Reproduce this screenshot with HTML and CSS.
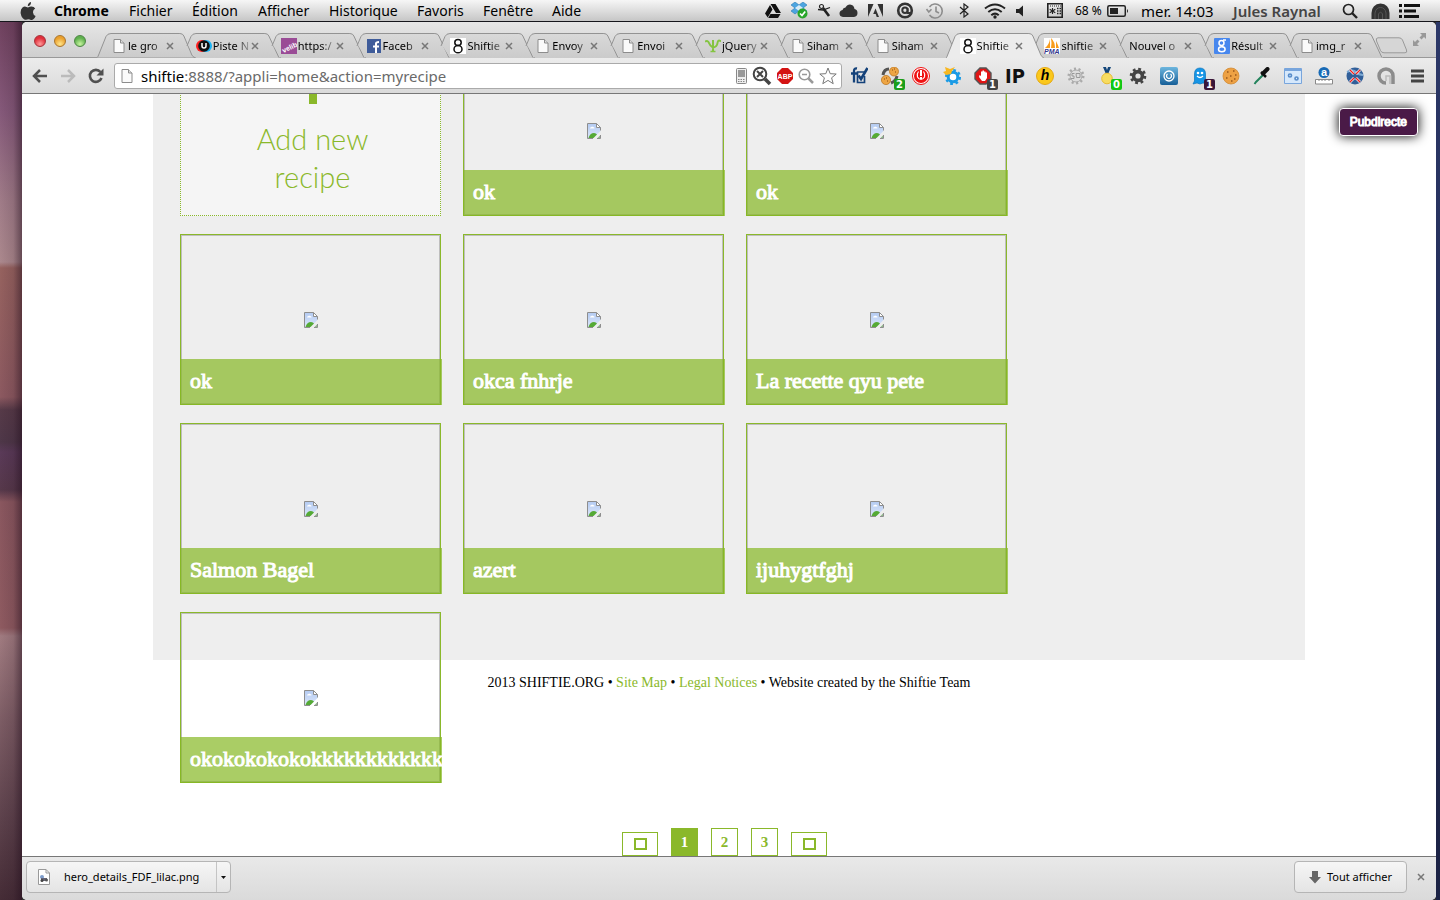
FILE: index.html
```html
<!DOCTYPE html>
<html lang="fr">
<head>
<meta charset="utf-8">
<title>Shiftie</title>
<link rel="stylesheet" href="styles.css">
</head>
<body>
<svg class="defs" aria-hidden="true">
  <defs>
    <linearGradient id="tabfill" x1="0" y1="0" x2="0" y2="1"><stop offset="0" stop-color="#d9d9d9"/><stop offset="1" stop-color="#cbcbcb"/></linearGradient>
    <linearGradient id="sky" x1="0" y1="0" x2="0" y2="1"><stop offset="0" stop-color="#b4cbf2"/><stop offset="1" stop-color="#dbe6fa"/></linearGradient>
    <linearGradient id="blue" x1="0" y1="0" x2="0" y2="1"><stop offset="0" stop-color="#6db6de"/><stop offset="1" stop-color="#175f98"/></linearGradient>
    <symbol id="tab-back" viewBox="0 0 99 25" preserveAspectRatio="none"><path d="M14 25 6 12 10 3Q11 .5 14 .5H83Q86 .5 87 3L98 25Z" fill="url(#tabfill)"/><path d="M5 13 9 3.500Q10.500 .5 14 .5H83Q86 .5 87 3L97 24.500" fill="none" stroke="#939393"/></symbol>
    <symbol id="tab-full" viewBox="0 0 99 25" preserveAspectRatio="none"><path d="M0 24.500Q1 24 2 21L9 3.500Q10.500 .5 14 .5H83Q86 .5 87 3L95 22Q96 24 98 24.500" fill="url(#tabfill)" stroke="#939393"/></symbol>
    <symbol id="tab-front" viewBox="0 0 99 25" preserveAspectRatio="none"><path d="M0 25Q1 24 2 21L9 3.500Q10.500 .5 14 .5H83Q86 .5 87 3L95 22Q96 24 98 25" fill="#ececec" stroke="#939393"/></symbol>
    <symbol id="doc" viewBox="0 0 16 16"><path d="M3 1.500H9.500L13 5V14.500H3Z" fill="#fafafa" stroke="#8c8c8c"/><path d="M9.500 1.500V5H13" fill="#ddd" stroke="#8c8c8c"/></symbol>
    <symbol id="eight" viewBox="0 0 16 16"><path d="M0 0H16V16H0Z" fill="#fff"/><ellipse cx="8" cy="4.500" rx="3.200" ry="3" fill="none" stroke="#111" stroke-width="1.500"/><ellipse cx="8" cy="11.200" rx="4" ry="3.600" fill="none" stroke="#111" stroke-width="1.500"/></symbol>
    <symbol id="cross" viewBox="0 0 8 8"><path d="M1 1 7 7M7 1 1 7" stroke="#777" stroke-width="1.500"/></symbol>
    <symbol id="broken" viewBox="0 0 14 16"><path d="M.5 .5H9.500L13.500 4.500V8L6 15.500H.5Z" fill="url(#sky)"/><path d="M3 5.500Q3 4 4.500 4 5 3 6 4 8 4 7.500 5.500Z" fill="#fff"/><path d="M1.500 15Q3 10 7 10 9 10 10 11.500L6.500 15Z" fill="#55aa35"/><path d="M10.500 15 13 12.500V15Z" fill="#8fb98a"/><path d="M9.500 .5V4.500H13.500Z" fill="#fff"/><path d="M6 15.500H.5V.5H9.500L13.500 4.500V7.500M9.500 .5V4.500H13.500M10 15.500H13.500V12" fill="none" stroke="#8e8e8e"/></symbol>
  </defs>
</svg>

<header class="menubar">
  <nav class="menus" aria-label="Menus">
    <button aria-label="Pomme"><svg width="16" height="18" viewBox="0 0 16 18"><path d="M11 0Q11.300 3.500 7.800 4.300 7.600 1 11 0ZM8 5.500Q9.500 4.500 11.500 4.500 14 4.600 15.200 6.500 12.800 8 13 10.500 13.200 13 15.600 14 14 17.800 12 17.900 10.800 17.900 9.800 17.400 8.500 16.900 7 17.400 5.500 18.100 4.400 17.600 1.500 16 .7 11.500 .2 7.500 2.500 5.500 4.500 4 6.500 5Z" fill="#333"/></svg></button>
    <button class="app">Chrome</button><button>Fichier</button><button>Édition</button><button>Afficher</button><button>Historique</button><button>Favoris</button><button>Fenêtre</button><button>Aide</button>
  </nav>
  <div class="status">
    <svg width="16" height="14" viewBox="0 0 16 14"><path d="M5.500 0H10.500L16 9H11ZM5 1 7.500 5.500 2.700 13.500 0 9.500ZM5.500 10H15.500L13 14H3.200Z" fill="#111"/></svg>
    <svg width="18" height="17" viewBox="0 0 18 17"><path d="M5 0 9 3 13 0 17 3 13 6 17 9 13 12 9 9 5 12 1 9 5 6 1 3Z" fill="#4da5e0" stroke="#2b79b5" stroke-width=".6"/><path d="M9 3 13 6 9 9 5 6Z" fill="#d9ecf8"/><circle cx="12.500" cy="11.500" r="5" fill="#28a62a"/><path d="M10 11.500 12 13.500 15.200 9.500" fill="none" stroke="#fff" stroke-width="1.700"/></svg>
    <svg width="15" height="15" viewBox="0 0 15 15"><circle cx="4.500" cy="3.500" r="2" fill="none" stroke="#222" stroke-width="1.200"/><path d="M1 6.500 6 7 13 4.500" fill="none" stroke="#222" stroke-width="1.300"/><path d="M6 5 12 13" stroke="#222" stroke-width="2.600"/></svg>
    <svg width="19" height="13" viewBox="0 0 19 13"><path d="M4 13Q.5 12.500 .5 9.500 .5 6.500 3.500 6 4 3.500 6.500 3.500 8 .5 11 .5 15 .8 15.500 5 18.500 5.500 18.500 9 18.500 12.500 15 13Z" fill="#333"/></svg>
    <svg width="15" height="13" viewBox="0 0 15 13"><path d="M0 0H5.500L0 13ZM9.500 0H15V13ZM7.500 4.500 11 13H8.700L7.700 10H5.200Z" fill="#333"/></svg>
    <svg width="18" height="17" viewBox="0 0 18 17"><circle cx="9" cy="8.500" r="6.800" fill="none" stroke="#333" stroke-width="2.600"/><circle cx="9" cy="8.200" r="2.700" fill="none" stroke="#333" stroke-width="2"/><path d="M11.500 6V11H15" fill="none" stroke="#333" stroke-width="1.800"/></svg>
    <svg width="18" height="16" viewBox="0 0 18 16"><path d="M3.500 4A7 7 0 1 1 3.500 12M.5 6 2.800 9 5.500 6.300M10 3.500V8.500L13 10" fill="none" stroke="#8d8d8d" stroke-width="1.600"/></svg>
    <svg width="10" height="15" viewBox="0 0 10 15"><path d="M1 4 9 11 5 14V1L9 4 1 11" fill="none" stroke="#222" stroke-width="1.200"/></svg>
    <svg width="22" height="16" viewBox="0 0 22 16"><path d="M1 5.500Q11-2.500 21 5.500M4.300 9Q11 3.500 17.700 9M7.300 12.300Q11 9 14.700 12.300" fill="none" stroke="#222" stroke-width="2"/><circle cx="11" cy="14" r="1.700" fill="#222"/></svg>
    <svg width="10" height="12" viewBox="0 0 10 12"><path d="M1 4H4L8 .5V11.500L4 8H1Z" fill="#222"/></svg>
    <svg width="16" height="15" viewBox="0 0 16 15"><path d="M.8 .8H15.200V14.200H.8Z" fill="none" stroke="#222" stroke-width="1.600"/><path d="M3 3H14" stroke="#222" stroke-dasharray="1 1"/><path d="M5.500 5V11M2.700 6.300 8.300 9.700M8.300 6.300 2.700 9.700" stroke="#222" stroke-width="1.100"/><path d="M10 5.500H14M10 8H14M10 10.500H14" stroke="#222" stroke-width="1.500" stroke-dasharray="1.500 1"/></svg>
    <span class="percent">68 %</span>
    <svg width="22" height="12" viewBox="0 0 22 12"><rect x=".8" y=".8" width="17.500" height="10.400" rx="1.500" fill="none" stroke="#222" stroke-width="1.500"/><path d="M3 3H11V9H3Z" fill="#222"/><path d="M20 4Q22 6 20 8Z" fill="#222"/></svg>
    <span class="clock">mer. 14:03</span>
    <span class="user">Jules Raynal</span>
    <svg width="16" height="16" viewBox="0 0 16 16"><circle cx="6.500" cy="6.500" r="5" fill="none" stroke="#222" stroke-width="1.700"/><path d="M10 10 15 15" stroke="#222" stroke-width="2.400"/></svg>
    <svg width="19" height="16" viewBox="0 0 19 16"><path d="M.5 16V10Q1 1 9.500 .5 18 1 18.500 10V16Z" fill="#333"/><path d="M4 16V10Q5 4.500 9.500 4.500 14 4.500 15 10V16M7.500 16V11Q9.500 7.500 11.500 11V16" fill="none" stroke="#555"/></svg>
    <svg width="21" height="14" viewBox="0 0 21 14"><path d="M0 1.500H3M5 1.500H21M0 7H3M5 7H17M0 12.500H3M5 12.500H20" stroke="#111" stroke-width="2.800"/></svg>
  </div>
</header>

<main class="desktop">
<div class="window">
  <div class="tabstrip">
    <div class="lights"><button class="red" aria-label="Fermer"></button><button class="amber" aria-label="Réduire"></button><button class="green" aria-label="Agrandir"></button></div>
    <ul class="tabs">
      <li><svg class="shape"><use href="#tab-full"/></svg><svg class="fav"><use href="#doc"/></svg><a href="#">le gro</a><button aria-label="Fermer l’onglet"><svg><use href="#cross"/></svg></button></li>
      <li><svg class="shape"><use href="#tab-back"/></svg><svg class="fav" viewBox="0 0 16 16"><circle cx="6" cy="8" r="6" fill="#f22"/><circle cx="10" cy="8" r="6" fill="#1ab3f5"/><circle cx="8" cy="8" r="5.800" fill="#111"/><path d="M6 5V8Q6 10 8 10T10 8V5" fill="none" stroke="#fff" stroke-width="1.500"/></svg><a href="#">Piste N</a><button aria-label="Fermer l’onglet"><svg><use href="#cross"/></svg></button></li>
      <li><svg class="shape"><use href="#tab-back"/></svg><svg class="fav" viewBox="0 0 16 16"><path d="M0 0H16V16H0Z" fill="#9a4c96"/><text x="0" y="12" transform="rotate(-25 8 8)" class="velib">velib</text></svg><a href="#">https:/</a><button aria-label="Fermer l’onglet"><svg><use href="#cross"/></svg></button></li>
      <li><svg class="shape"><use href="#tab-back"/></svg><svg class="fav" viewBox="0 0 16 16"><path d="M1 1H15V15H1Z" fill="#3f5c9a"/><path d="M10 15V5.500Q10 4 13 4M7 8.500H13" fill="none" stroke="#fff" stroke-width="2"/></svg><a href="#">Faceb</a><button aria-label="Fermer l’onglet"><svg><use href="#cross"/></svg></button></li>
      <li><svg class="shape"><use href="#tab-back"/></svg><svg class="fav"><use href="#eight"/></svg><a href="#">Shiftie</a><button aria-label="Fermer l’onglet"><svg><use href="#cross"/></svg></button></li>
      <li><svg class="shape"><use href="#tab-back"/></svg><svg class="fav"><use href="#doc"/></svg><a href="#">Envoy</a><button aria-label="Fermer l’onglet"><svg><use href="#cross"/></svg></button></li>
      <li><svg class="shape"><use href="#tab-back"/></svg><svg class="fav"><use href="#doc"/></svg><a href="#">Envoi</a><button aria-label="Fermer l’onglet"><svg><use href="#cross"/></svg></button></li>
      <li><svg class="shape"><use href="#tab-back"/></svg><svg class="fav" viewBox="0 0 16 16"><path d="M0 3.500Q3 2 4 5T8 9.500Q12 9 12.500 5T16 3.500M8 2V14" fill="none" stroke="#84c441" stroke-width="2"/><path d="M5.500 13.500H10.500" stroke="#84c441" stroke-width="1.500"/></svg><a href="#">jQuery</a><button aria-label="Fermer l’onglet"><svg><use href="#cross"/></svg></button></li>
      <li><svg class="shape"><use href="#tab-back"/></svg><svg class="fav"><use href="#doc"/></svg><a href="#">Siham</a><button aria-label="Fermer l’onglet"><svg><use href="#cross"/></svg></button></li>
      <li><svg class="shape"><use href="#tab-back"/></svg><svg class="fav"><use href="#doc"/></svg><a href="#">Siham</a><button aria-label="Fermer l’onglet"><svg><use href="#cross"/></svg></button></li>
      <li class="current"><svg class="shape"><use href="#tab-front"/></svg><svg class="fav"><use href="#eight"/></svg><a href="#">Shiftie</a><button aria-label="Fermer l’onglet"><svg><use href="#cross"/></svg></button></li>
      <li><svg class="shape"><use href="#tab-back"/></svg><svg class="fav" viewBox="0 0 16 16"><path d="M0 0H16V16H0Z" fill="#fff"/><path d="M1 10Q5 7 6 1V10ZM7 10Q8 5 7 0 11 4 11 10ZM12 10V3Q14 7 15 10Z" fill="#f89c1c"/><text x="0" y="16" class="pma">PMA</text></svg><a href="#">shiftie</a><button aria-label="Fermer l’onglet"><svg><use href="#cross"/></svg></button></li>
      <li><svg class="shape"><use href="#tab-back"/></svg><a class="plain" href="#">Nouvel o</a><button aria-label="Fermer l’onglet"><svg><use href="#cross"/></svg></button></li>
      <li><svg class="shape"><use href="#tab-back"/></svg><svg class="fav" viewBox="0 0 16 16"><rect width="16" height="16" rx="1" fill="#4787ee"/><circle cx="7.500" cy="5" r="2.500" fill="none" stroke="#fff" stroke-width="1.500"/><ellipse cx="7.800" cy="11.300" rx="3.300" ry="2.500" fill="none" stroke="#fff" stroke-width="1.500"/><path d="M9 2H12M8 7.500 9 9" stroke="#fff" stroke-width="1.300"/></svg><a href="#">Résult</a><button aria-label="Fermer l’onglet"><svg><use href="#cross"/></svg></button></li>
      <li><svg class="shape"><use href="#tab-back"/></svg><svg class="fav"><use href="#doc"/></svg><a href="#">img_r</a><button aria-label="Fermer l’onglet"><svg><use href="#cross"/></svg></button></li>
    </ul>
    <button class="newtab" aria-label="Nouvel onglet"><svg width="33" height="17" viewBox="0 0 33 17"><path d="M3 .8H24Q26.500 .8 27.500 3L31.500 13Q32.500 15.800 30 15.800H9Q6.500 15.800 5.500 13.500L1.500 4Q.5 .8 3 .8Z" fill="#d6d6d6" stroke="#999"/></svg></button>
    <button class="full" aria-label="Plein écran"><svg width="15" height="15" viewBox="0 0 15 15"><path d="M8 1H14V7L12 5 9.500 7.500 7.500 5.500 10 3ZM7 14H1V8L3 10 5.500 7.500 7.500 9.500 5 12Z" fill="#999"/></svg></button>
  </div>

  <div class="toolbar">
    <div class="nav">
      <button aria-label="Précédent"><svg width="16" height="14" viewBox="0 0 16 14"><path d="M8 1 2 7 8 13M2 7H15" fill="none" stroke="#505050" stroke-width="2.500"/></svg></button>
      <button aria-label="Suivant"><svg width="16" height="14" viewBox="0 0 16 14"><path d="M8 1 14 7 8 13M14 7H1" fill="none" stroke="#bbb" stroke-width="2.500"/></svg></button>
      <button aria-label="Recharger"><svg width="16" height="16" viewBox="0 0 16 16"><path d="M12.500 4A6 6 0 1 0 13.500 10" fill="none" stroke="#505050" stroke-width="2.600"/><path d="M15.500 .5V7.500H8.500Z" fill="#505050"/></svg></button>
    </div>
    <div class="omnibox">
      <svg width="16" height="16"><use href="#doc"/></svg>
      <label for="url">shiftie</label><input id="url" type="text" value=":8888/?appli=home&amp;action=myrecipe">
      <div class="omni-icons">
        <svg width="11" height="16" viewBox="0 0 11 16"><rect x=".5" y=".5" width="10" height="15" rx="1" fill="#eee" stroke="#888"/><path d="M2 2H9V9H2Z" fill="#999"/><path d="M2 11.500H9M2 13.500H9" stroke="#888" stroke-dasharray="1.500 1"/></svg>
        <svg width="20" height="20" viewBox="0 0 20 20"><circle cx="8" cy="8" r="6.300" fill="none" stroke="#444" stroke-width="2"/><path d="M5 5 11 11M11 5 5 11" stroke="#444" stroke-width="2"/><path d="M13 13 18 18" stroke="#444" stroke-width="3.500"/></svg>
        <svg width="16" height="16" viewBox="0 0 16 16"><path d="M5 0H11L16 5V11L11 16H5L0 11V5Z" fill="#d41313"/><text x="8" y="11" class="abp">ABP</text></svg>
        <svg width="16" height="16" viewBox="0 0 16 16"><circle cx="6.500" cy="6.500" r="5.300" fill="none" stroke="#999" stroke-width="1.600"/><path d="M4 6.500H9" stroke="#999" stroke-width="1.500"/><path d="M10.500 10.500 15 15" stroke="#999" stroke-width="2.500"/></svg>
        <svg width="18" height="18" viewBox="0 0 18 18"><path d="M9 1 11.200 6.700 17.200 7 12.600 10.800 14.200 16.700 9 13.400 3.800 16.700 5.400 10.800 .8 7 6.800 6.700Z" fill="none" stroke="#777"/></svg>
      </div>
    </div>
    <div class="extensions">
      <button aria-label="Vérification"><svg viewBox="0 0 18 18"><path d="M7 1.500Q4 1 4 4V15.500M1 6.500H7" fill="none" stroke="#14427a" stroke-width="2.300"/><path d="M14 5H7.500V15.500H14.500V9" fill="none" stroke="#14427a" stroke-width="1.700"/><path d="M8.500 8.500 11 12 17.500 1" fill="none" stroke="#14427a" stroke-width="2.600"/></svg></button>
      <button aria-label="Échange de cookies"><svg viewBox="0 0 18 18"><path d="M2 8Q3 2 8 2M16 9Q15 14 10 16" fill="none" stroke="#555" stroke-width="3"/><circle cx="13" cy="4.500" r="4.500" fill="#eda544" stroke="#b87018" stroke-width=".7"/><circle cx="5" cy="13" r="4.600" fill="#eda544" stroke="#b87018" stroke-width=".7"/><path d="M11 3H12M14 5H15M13 2H14M3 12H4M6 14H7M5 11H6" stroke="#8c4b10"/></svg><b class="badge lime">2</b></button>
      <button aria-label="Alerte"><svg viewBox="0 0 18 18"><circle cx="9" cy="9" r="8.500" fill="#fff" stroke="#e11" stroke-width="1"/><circle cx="9" cy="9" r="7" fill="#e11"/><path d="M6.500 4.500Q4.500 7 5.500 10 7 12.500 9 12.500T12.500 10Q13.500 7 11.500 4.500" fill="none" stroke="#fff" stroke-width="1.200"/><path d="M9 3V9M9 10V12" stroke="#fff" stroke-width="2"/></svg></button>
      <button aria-label="Réglages bleus"><svg viewBox="0 0 18 18"><circle cx="10" cy="10" r="6.800" fill="none" stroke="#1b9be5" stroke-width="2.500" stroke-dasharray="2.700 2.640"/><circle cx="10" cy="10" r="4.800" fill="#fff" stroke="#1b9be5" stroke-width="3"/><path d="M0 5 3 4 2 0 7 2 12 0 9 4 8 7 3 8Z" fill="#f8b720"/></svg></button>
      <button aria-label="Bloqueur"><svg viewBox="0 0 18 18"><path d="M6 1H12L17 6V12L12 17H6L1 12V6Z" fill="#e01515" stroke="#555" stroke-width="1.400"/><path d="M5.500 8 7 9V4.500H8.500V3.500H10V4.500H11.500V5.500H13V11L11 14H8L5 10Z" fill="#fff"/></svg><b class="badge dark">1</b></button>
      <button class="ip">IP</button>
      <button class="honey">h</button>
      <button aria-label="Engrenage gris"><svg viewBox="0 0 18 18"><circle cx="9" cy="9" r="7" fill="none" stroke="#aaa" stroke-width="3" stroke-dasharray="2 2.400"/><circle cx="9" cy="9" r="6" fill="#ddd" stroke="#aaa"/><path d="M7.500 6.500H5V9H7V11.500H4M9 6.500H13V10.500H9.500Z" fill="none" stroke="#999"/></svg></button>
      <button aria-label="Médaille"><svg viewBox="0 0 18 18"><path d="M5 0H8L9 3 10 0H13L10.500 6H7.500Z" fill="#14467a"/><circle cx="9" cy="11.500" r="5.300" fill="#f7dc60" stroke="#e6bb35"/></svg><b class="badge bright">0</b></button>
      <button aria-label="Réglages"><svg viewBox="0 0 18 18"><circle cx="9" cy="9" r="6.800" fill="none" stroke="#444" stroke-width="3" stroke-dasharray="2.700 2.640"/><circle cx="9" cy="9" r="4.400" fill="none" stroke="#444" stroke-width="3.600"/></svg></button>
      <button aria-label="Actualiser"><svg viewBox="0 0 18 18"><rect width="18" height="18" rx="2" fill="url(#blue)"/><circle cx="9" cy="9" r="5" fill="none" stroke="#fff" stroke-width="1.300"/><path d="M10.500 7A2.500 2.500 0 1 1 7.500 7" fill="none" stroke="#fff" stroke-width="1.300"/></svg></button>
      <button aria-label="Fantôme"><svg viewBox="0 0 18 18"><path d="M3.500 7Q3.500 1 9 1T14.500 7V15L16 17 12 16 9 17 6 16 2 17 3.500 14Z" fill="#1595e6" stroke="#0b75bd" stroke-width=".7"/><circle cx="7" cy="6" r="1.300" fill="#fff"/><circle cx="11" cy="6" r="1.300" fill="#fff"/><path d="M6 9Q9 12 12 9" fill="none" stroke="#fff" stroke-width="1.200"/></svg><b class="badge plum">1</b></button>
      <button aria-label="Cookie"><svg viewBox="0 0 18 18"><circle cx="9" cy="9" r="8" fill="#eda144" stroke="#d18a35" stroke-width=".8"/><path d="M5 5H6.500M11 4H12.500M8 9H9.500M4 11H5.500M12 12H13.500M13 8H14.500M9 14H10.500" stroke="#96571c" stroke-width="1.400"/></svg></button>
      <button aria-label="Pipette"><svg viewBox="0 0 18 18"><path d="M10 8 3 15 1.500 17" fill="none" stroke="#23835c" stroke-width="2"/><path d="M8 5 13 10" stroke="#111" stroke-width="2.500"/><path d="M10 6.500 14.500 2" stroke="#111" stroke-width="4" stroke-linecap="round"/></svg></button>
      <button aria-label="Fenêtre"><svg viewBox="0 0 18 18"><path d="M.5 1.500H17.500V16.500H.5Z" fill="#d6e8fb" stroke="#78a5dc"/><path d="M1 3H17" stroke="#78a5dc" stroke-width="2"/><circle cx="6" cy="8.500" r="1.500" fill="none" stroke="#598dca" stroke-width="1.700"/><circle cx="12.500" cy="11.500" r="1.500" fill="none" stroke="#598dca" stroke-width="1.700"/></svg></button>
      <button aria-label="Règle"><svg viewBox="0 0 18 18"><circle cx="9" cy="5.500" r="5.500" fill="#1769b5"/><text x="9" y="9" class="aletter">a</text><path d="M.5 12.500H17.500V17H.5ZM4 12V14M7 12V14M10 12V14M14 12V14" fill="#fff" stroke="#888"/></svg></button>
      <button aria-label="Cible"><svg viewBox="0 0 18 18"><circle cx="9" cy="9" r="8.500" fill="#315f99"/><path d="M1 5Q7 2 10 5T17 8" fill="none" stroke="#7ca9d4" stroke-width="2"/><path d="M4 3 8 7M14 3 10 7M4 15 8 11M14 15 10 11" stroke="#fff" stroke-width="2.600"/><path d="M4 3 8 7M14 3 10 7M4 15 8 11M14 15 10 11" stroke="#e22" stroke-width="1.400"/></svg></button>
      <button aria-label="Arobase"><svg viewBox="0 0 18 18"><path d="M9 16A7 7 0 1 1 16 9V17" fill="none" stroke="#8c8c8c" stroke-width="3.500"/><path d="M9 14V9H13V17" fill="none" stroke="#bbb" stroke-width="1.500"/></svg></button>
      <button aria-label="Menu"><svg viewBox="0 0 18 18"><path d="M3 4H16M3 9H16M3 14H16" stroke="#444" stroke-width="2.800"/></svg></button>
    </div>
  </div>

  <div class="page">
    <section class="recipes">
      <div class="grid">
        <a class="card add" href="#"><svg width="28" height="28" viewBox="0 0 28 28"><path d="M0 10H28V18H0Z" fill="#8ab82a"/><path d="M10 0H18V28H10Z" fill="#8ab82a"/></svg><span>Add new<br>recipe</span></a>
        <a class="card" href="#"><span class="photo"><svg width="14" height="16"><use href="#broken"/></svg></span><span class="title">ok</span></a>
        <a class="card" href="#"><span class="photo"><svg width="14" height="16"><use href="#broken"/></svg></span><span class="title">ok</span></a>
        <a class="card" href="#"><span class="photo"><svg width="14" height="16"><use href="#broken"/></svg></span><span class="title">ok</span></a>
        <a class="card" href="#"><span class="photo"><svg width="14" height="16"><use href="#broken"/></svg></span><span class="title">okca fnhrje</span></a>
        <a class="card" href="#"><span class="photo"><svg width="14" height="16"><use href="#broken"/></svg></span><span class="title">La recette qyu pete</span></a>
        <a class="card" href="#"><span class="photo"><svg width="14" height="16"><use href="#broken"/></svg></span><span class="title">Salmon Bagel</span></a>
        <a class="card" href="#"><span class="photo"><svg width="14" height="16"><use href="#broken"/></svg></span><span class="title">azert</span></a>
        <a class="card" href="#"><span class="photo"><svg width="14" height="16"><use href="#broken"/></svg></span><span class="title">ijuhygtfghj</span></a>
        <a class="card" href="#"><span class="photo"><svg width="14" height="16"><use href="#broken"/></svg></span><span class="title">okokokokokokkkkkkkkkkkk</span></a>
      </div>
    </section>
    <footer class="site-footer">2013 SHIFTIE.ORG • <a href="#">Site Map</a> • <a href="#">Legal Notices</a> • Website created by the Shiftie Team</footer>
    <nav class="pager" aria-label="Pages">
      <a class="step" href="#" aria-label="Précédente"><svg width="13" height="12" viewBox="0 0 13 12"><path d="M1 1H12V11H1Z" fill="none" stroke="#8ab82a" stroke-width="2"/></svg></a>
      <a class="on" href="#">1</a><a href="#">2</a><a href="#">3</a>
      <a class="step" href="#" aria-label="Suivante"><svg width="13" height="12" viewBox="0 0 13 12"><path d="M1 1H12V11H1Z" fill="none" stroke="#8ab82a" stroke-width="2"/></svg></a>
    </nav>
    <button class="pub">Pubdirecte</button>
  </div>

  <div class="downloads">
    <div class="file"><button class="name"><svg width="14" height="16" viewBox="0 0 14 16"><path d="M1.500 .5H9L12.500 4V15.500H1.500Z" fill="#fff" stroke="#999"/><path d="M9 .5V4H12.500" fill="none" stroke="#999"/><circle cx="5" cy="8" r="2" fill="#7d9ccc"/><path d="M4 9H10V12H4Z" fill="#667"/><circle cx="5" cy="11.500" r="1.500" fill="#444"/><circle cx="9.500" cy="11" r="1.500" fill="#555"/></svg>hero_details_FDF_lilac.png</button><button class="more" aria-label="Options"><svg width="5" height="3" viewBox="0 0 5 3"><path d="M0 0H5L2.500 3Z" fill="#111"/></svg></button></div>
    <button class="all"><svg width="12" height="13" viewBox="0 0 12 13"><path d="M3 0H9V6H12L6 12.500 0 6H3Z" fill="#666"/></svg>Tout afficher</button>
    <button class="close" aria-label="Fermer"><svg width="8" height="8"><use href="#cross"/></svg></button>
  </div>
</div>
</main>
</body>
</html>
```
FILE: styles.css
```css
* { box-sizing: border-box; }
body {
  margin: 0;
  height: 100vh;
  overflow: hidden;
  display: flex;
  flex-direction: column;
  font: 14px/20px "Noto Sans", "Open Sans", sans-serif;
  color: #000;
}
button { margin: 0; padding: 0; border: 0; background: none; font: inherit; color: inherit; }
a { color: inherit; text-decoration: none; }
svg { flex: none; display: block; }
.defs { position: absolute; width: 0; height: 0; }

.menubar {
  flex: none;
  height: 22px;
  display: flex;
  justify-content: space-between;
  align-items: center;
  padding: 0 20px;
  border-bottom: 1px solid #16161c;
  background: linear-gradient(#f6f6f6, #c6c6c6);
}
.menus { display: grid; grid-template-columns: 34px 75px 63px 66px 71px 88px 66px 69px 40px; align-items: center; white-space: nowrap; }
.menus button { text-align: left; }
.app { font-weight: 700; }
.status {
  display: grid;
  grid-template-columns: 25px 27px 22px 29px 28px 30px 33px 25px 31px 32px 28px 32px 34px 92px 109px 29px 28px 21px;
  align-items: center;
  white-space: nowrap;
}
.percent { font-size: 12px; }
.clock, .user { font-size: 15px; }
.user { color: #444; font-weight: 600; }

.desktop {
  flex: 1;
  min-height: 0;
  display: flex;
  padding: 0 4px 0 22px;
  background:
    linear-gradient(#2c3868, #1b2244) right / 4px 100% no-repeat,
    linear-gradient(90deg, rgba(30, 10, 25, 0), rgba(30, 10, 25, .12) 60%, rgba(30, 10, 25, .5)) left / 22px 100% no-repeat,
    linear-gradient(#70425f 0, #85597a 90px, #a07c88 180px, #ab888d 240px, #96625f 246px, #8c5960 375px, #563a48 388px, #4e3748 420px, #5a3a58 430px, #56384a 468px, #8a575f 480px, #8e5a60 606px, #a07b80 614px, #7c5c64 700px, #5c414b 800px, #452c36 100%) left / 22px 100% no-repeat,
    #333;
}
.window {
  flex: 1;
  min-width: 0;
  display: flex;
  flex-direction: column;
  border-radius: 5px;
  overflow: hidden;
  background: #fff;
}

.tabstrip {
  flex: none;
  height: 36px;
  display: flex;
  align-items: flex-end;
  padding-right: 9px;
  background: linear-gradient(#e6e6e6, #cfcfcf);
  border-bottom: 1px solid #999;
}
.lights { display: flex; gap: 8px; width: 75px; padding: 0 0 10px 12px; }
.lights button { width: 12px; height: 12px; border-radius: 50%; border: 1px solid; }
.lights .red { background: radial-gradient(circle at 50% 80%, #ff9a9a, #e02e3a 65%); border-color: #a5323a; }
.lights .amber { background: radial-gradient(circle at 50% 80%, #ffe58a, #eaa02e 65%); border-color: #a9752c; }
.lights .green { background: radial-gradient(circle at 50% 80%, #c8f5a0, #5fb04e 65%); border-color: #4c8544; }
.tabs { flex: 1; min-width: 0; display: flex; margin: 0; padding: 0; list-style: none; }
.tabs li {
  flex: 1 1 0;
  min-width: 0;
  position: relative;
  display: flex;
  align-items: center;
  height: 25px;
  padding-left: 14px;
  margin-bottom: -1px;
}
.shape { position: absolute; left: 0; top: 0; width: calc(100% + 14px); height: 25px; }
.fav { position: relative; width: 16px; height: 16px; margin-right: 1px; }
.tabs a {
  position: relative;
  width: 37px;
  white-space: nowrap;
  font-size: 11px;
  line-height: 16px;
  mask-image: linear-gradient(90deg, #000 60%, rgba(0, 0, 0, .2));
}
.tabs a.plain { width: 54px; }
.tabs li button { position: relative; margin-left: 1px; }
.tabs li button svg { width: 8px; height: 8px; }
.tabs .current { z-index: 1; }
.newtab { margin: 0 4px 3px 5px; }
.full { margin-bottom: 10px; }

.toolbar {
  flex: none;
  height: 36px;
  display: flex;
  align-items: center;
  gap: 8px;
  padding: 0 10px;
  background: linear-gradient(#ececec, #dadada);
  border-bottom: 1px solid #777;
}
.nav { display: flex; align-items: center; gap: 12px; width: 74px; }
.omnibox {
  flex: 1;
  min-width: 0;
  height: 26px;
  display: flex;
  align-items: center;
  padding: 0 4px;
  border: 1px solid #aaa;
  border-radius: 3px;
  background: #fff;
  font-size: 15px;
}
.omnibox label { margin-left: 6px; }
.omnibox input { flex: 1; min-width: 0; padding: 0; border: 0; outline: 0; background: none; font: inherit; color: #6a6a6a; }
.omni-icons { display: flex; align-items: center; gap: 5px; }
.abp { font: bold 7px "Liberation Sans", sans-serif; fill: #fff; text-anchor: middle; }
.velib { font: bold 7px "Liberation Sans", sans-serif; fill: #fff; }
.pma { font: italic bold 7px "Liberation Sans", sans-serif; fill: #33358c; }
.aletter { font: bold 11px "Liberation Sans", sans-serif; fill: #fff; text-anchor: middle; }
.extensions { width: 576px; display: flex; justify-content: space-between; align-items: center; }
.extensions button { position: relative; width: 18px; height: 18px; }
.extensions svg { width: 18px; height: 18px; }
.badge {
  position: absolute;
  right: -6px;
  bottom: -5px;
  min-width: 11px;
  height: 11px;
  border-radius: 2px;
  color: #fff;
  font: bold 10px/11px "DejaVu Sans", sans-serif;
  text-align: center;
}
.lime { background: #1b9e1b; }
.dark { background: #444; }
.bright { background: #12c812; }
.plum { background: #3a1638; }
.extensions .ip { font: bold 20px/18px "DejaVu Sans Condensed", "DejaVu Sans", sans-serif; color: #111; }
.extensions .honey { border-radius: 50%; background: #fbc81c; border: 1px solid #e5a912; font: italic bold 14px/15px "Liberation Sans", sans-serif; }

.page {
  flex: 1;
  min-height: 0;
  overflow: hidden;
  position: relative;
  font: 14px/18px "Liberation Serif", serif;
  color: #000;
}
.recipes { max-width: 1152px; margin: 0 auto; padding: 0 27px; background: #eee; display: flow-root; }
.grid {
  display: grid;
  grid-template-columns: repeat(3, 261px);
  gap: 18px 22px;
  margin: -49px 0 -123px;
}
.card { min-height: 171px; display: grid; border: 1px solid #8ab82a; }
.photo { grid-area: 1 / 1; display: flex; justify-content: center; padding-top: 76px; border: 1px solid #bebebe; }
.title {
  grid-area: 1 / 1;
  align-self: end;
  position: relative;
  height: 46px;
  margin: 0 -2px -1px -1px;
  padding: 0 10px;
  overflow: hidden;
  white-space: nowrap;
  background: rgba(134, 184, 36, .7);
  color: #fff;
  font-size: 22px;
  line-height: 43px;
  -webkit-text-stroke: 1px #fff;
}
.add {
  align-content: end;
  justify-items: center;
  gap: 16px;
  padding: 0 0 19px 4px;
  border-style: dotted;
  background: #f5f5f5;
  color: #8ab82a;
  font: 300 29px/38px Lato, sans-serif;
  text-align: center;
}
.site-footer { padding-top: 14px; text-align: center; }
.site-footer a { color: #8ab82a; }
.pager { display: flex; justify-content: center; align-items: flex-end; gap: 13px; margin-top: 136px; padding-right: 9px; }
.pager a {
  width: 27px;
  height: 28px;
  display: flex;
  justify-content: center;
  align-items: center;
  border: 1px solid #8ab82a;
  color: #8ab82a;
  font-weight: bold;
  font-size: 15px;
}
.pager .step { width: 36px; height: 24px; }
.pager .on { background: #8ab82a; color: #fff; }
.pub {
  position: absolute;
  top: 14px;
  right: 18px;
  height: 28px;
  padding: 0 10px;
  border: 1px solid #fff;
  border-radius: 4px;
  background: #4a1a47;
  box-shadow: 0 0 12px #000;
  color: #fff;
  font: 12px/26px "Liberation Sans", sans-serif;
  -webkit-text-stroke: 1px #fff;
}

.downloads {
  flex: none;
  height: 44px;
  display: flex;
  align-items: center;
  padding: 0 11px 3px 4px;
  border-top: 1px solid #777;
  background: linear-gradient(#e9e9e9, #dadada);
  font-size: 11px;
}
.file, .all { height: 32px; display: flex; align-items: center; border: 1px solid #b5b5b5; border-radius: 4px; background: linear-gradient(#f6f6f6, #e4e4e4); }
.name { display: flex; align-items: center; gap: 13px; height: 30px; padding: 0 17px 0 10px; }
.more { height: 30px; padding: 0 4px; border-left: 1px solid #c4c4c4; }
.all { gap: 6px; margin-left: auto; padding: 0 14px; }
.close { margin-left: 10px; }
```
